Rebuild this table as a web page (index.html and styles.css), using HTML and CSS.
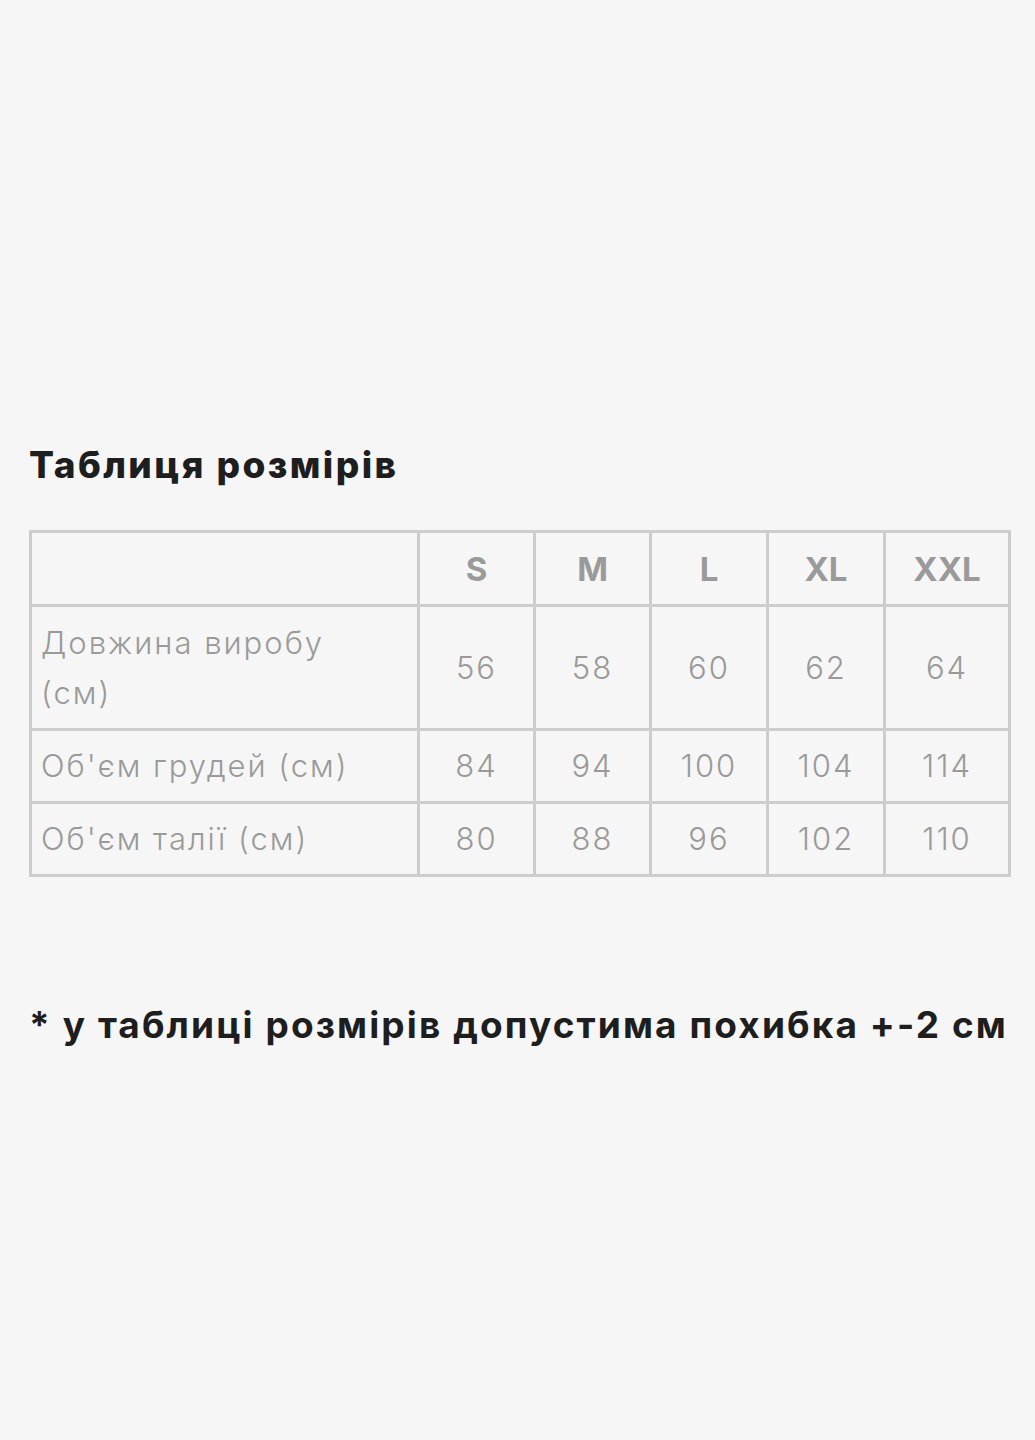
FILE: index.html
```html
<!DOCTYPE html>
<html lang="uk">
<head>
<meta charset="utf-8">
<link rel="stylesheet" href="styles.css">
</head>
<body>
<main class="page">
  <h1 class="title">Таблиця розмірів</h1>
  <table class="sizes">
    <colgroup>
      <col class="c-label"><col class="c-s"><col class="c-m"><col class="c-l"><col class="c-xl"><col class="c-xxl">
    </colgroup>
    <thead>
      <tr class="r-head"><th></th><th>S</th><th>M</th><th>L</th><th>XL</th><th>XXL</th></tr>
    </thead>
    <tbody>
      <tr class="r-tall"><td class="label">Довжина виробу<br>(см)</td><td>56</td><td>58</td><td>60</td><td>62</td><td>64</td></tr>
      <tr class="r-row"><td class="label">Об'єм грудей (см)</td><td>84</td><td>94</td><td>100</td><td>104</td><td>114</td></tr>
      <tr class="r-row"><td class="label">Об'єм талії (см)</td><td>80</td><td>88</td><td>96</td><td>102</td><td>110</td></tr>
    </tbody>
  </table>
  <p class="note">* у таблиці розмірів допустима похибка +-2 см</p>
</main>
</body>
</html>
```

FILE: styles.css
```css
html, body {
  margin: 0;
  padding: 0;
  background: #f6f6f6;
}
.page {
  padding: 443px 0 0 29px;
  font-family: Inter, "Noto Sans", sans-serif;
}
.title {
  margin: 0;
  font-size: 37px;
  line-height: 44px;
  font-weight: 800;
  color: #1e1e1e;
  letter-spacing: 2.4px;
}
.sizes {
  margin-top: 43px;
  border-collapse: collapse;
  table-layout: fixed;
  width: 979px;
  border: 3px solid #cdcdcd;
}
.sizes th, .sizes td {
  border: 3px solid #cdcdcd;
  padding: 0;
  text-align: center;
  vertical-align: middle;
  color: #9a9a9a;
}
.c-label { width: 388px; }
.c-s { width: 116px; }
.c-m { width: 116px; }
.c-l { width: 117px; }
.c-xl { width: 117px; }
.c-xxl { width: 125px; }
.sizes th {
  font-size: 33px;
  font-weight: 700;
}
.sizes td {
  font-size: 31px;
  font-weight: 300;
  line-height: 50px;
  letter-spacing: 2px;
}
.sizes td.label {
  text-align: left;
  padding-left: 9px;
}
.r-head { height: 74px; }
.r-tall { height: 124px; }
.r-row { height: 73px; }
.note {
  margin: 126px 0 0;
  font-size: 37px;
  line-height: 44px;
  font-weight: 700;
  color: #1e1e1e;
  letter-spacing: 2.1px;
  white-space: nowrap;
}
```
